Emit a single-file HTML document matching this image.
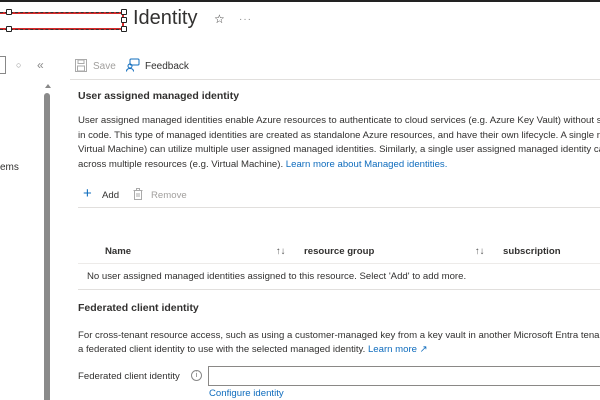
<!DOCTYPE html>
<html><head><meta charset="utf-8"><style>
*{margin:0;padding:0;box-sizing:border-box}
html,body{width:600px;height:400px;overflow:hidden}
body{background:#fff;font-family:"Liberation Sans",sans-serif;color:#323130;position:relative}
#w{position:absolute;left:0;top:0;width:600px;height:400px;overflow:hidden}
.a{position:absolute;white-space:nowrap}
.p{font-size:9.6px;line-height:14px;color:#323130}
.lnk{color:#0f6cbd}
h3{font-size:10.5px;font-weight:bold}
</style></head><body><div id="w">
<div class="a" style="left:0;top:0;width:600px;height:2px;background:#222"></div>
<div class="a" style="left:-2px;top:12px;width:126px;height:18px;border:2px solid #d42a2a;"></div>
<div class="a" style="left:0;top:12px;width:124px;height:0;border-top:1px dashed #333"></div>
<div class="a" style="left:0;top:29px;width:124px;height:0;border-top:1px dashed #333"></div>
<div class="a" style="left:6px;top:9px;width:6px;height:6px;border:1px solid #222;background:#fff;border-radius:1px"></div>
<div class="a" style="left:6px;top:26px;width:6px;height:6px;border:1px solid #222;background:#fff;border-radius:1px"></div>
<div class="a" style="left:121px;top:9px;width:6px;height:6px;border:1px solid #222;background:#fff;border-radius:1px"></div>
<div class="a" style="left:121px;top:17px;width:6px;height:6px;border:1px solid #222;background:#fff;border-radius:1px"></div>
<div class="a" style="left:121px;top:26px;width:6px;height:6px;border:1px solid #222;background:#fff;border-radius:1px"></div>
<div class="a" style="left:133px;top:7px;font-size:20px;color:#323130">Identity</div>
<div class="a" style="left:214px;top:12px;font-size:12px">☆</div>
<div class="a" style="left:239px;top:14px;font-size:10px;color:#888;letter-spacing:1px">···</div>
<div class="a" style="left:-2px;top:56px;width:8px;height:18px;border:1px solid #888;border-left:none"></div>
<div class="a" style="left:16px;top:60px;font-size:9px;color:#888">○</div>
<div class="a" style="left:37px;top:58px;font-size:12px;color:#888">«</div>
<div class="a" style="left:0;top:162px;font-size:10px">ems</div>
<div class="a" style="left:45px;top:84px;width:0;height:0;border-left:3px solid transparent;border-right:3px solid transparent;border-bottom:4px solid #888"></div>
<div class="a" style="left:44px;top:93px;width:6px;height:310px;background:#8a8a8a;border-radius:3px"></div>
<svg class="a" style="left:75px;top:59px" width="12" height="13" viewBox="0 0 12 13"><rect x="0.5" y="0.5" width="11" height="12" fill="none" stroke="#aaa"/><rect x="3" y="1" width="6" height="3.5" fill="none" stroke="#aaa"/><rect x="2.5" y="7" width="7" height="5" fill="none" stroke="#aaa"/></svg>
<div class="a" style="left:93px;top:61px;font-size:10px;color:#a19f9d">Save</div>
<svg class="a" style="left:126px;top:58px" width="14" height="14" viewBox="0 0 14 14"><rect x="4" y="1" width="9" height="6" rx="1" fill="none" stroke="#0f6cbd"/><circle cx="4" cy="8" r="2" fill="none" stroke="#0f6cbd"/><path d="M0.5 13.5c0-2 1.5-3 3.5-3s3.5 1 3.5 3" fill="none" stroke="#0f6cbd"/></svg>
<div class="a" style="left:145px;top:61px;font-size:10px">Feedback</div>
<div class="a" style="left:70px;top:79px;width:530px;height:1px;background:#e1dfdd"></div>
<h3 class="a" style="left:78px;top:90px">User assigned managed identity</h3>
<div class="a p" style="left:78px;top:114px;line-height:14.5px">User assigned managed identities enable Azure resources to authenticate to cloud services (e.g. Azure Key Vault) without storing credentials<br>in code. This type of managed identities are created as standalone Azure resources, and have their own lifecycle. A single resource (e.g.<br>Virtual Machine) can utilize multiple user assigned managed identities. Similarly, a single user assigned managed identity can be shared<br>across multiple resources (e.g. Virtual Machine). <span class="lnk">Learn more about Managed identities.</span></div>
<div class="a" style="left:83px;top:186px;font-size:15px;color:#0f6cbd;line-height:15px">+</div>
<div class="a" style="left:102px;top:190px;font-size:9.6px">Add</div>
<svg class="a" style="left:133px;top:188px" width="10" height="12" viewBox="0 0 10 12"><path d="M0.5 2.5h9M3.5 2.5V0.5h3v2M1.5 2.5v9h7v-9M4 5v4M6 5v4" fill="none" stroke="#aaa"/></svg>
<div class="a" style="left:151px;top:190px;font-size:9.6px;color:#a19f9d">Remove</div>
<div class="a" style="left:78px;top:207px;width:522px;height:1px;background:#e1dfdd"></div>
<div class="a" style="left:105px;top:246px;font-size:9.6px;font-weight:bold;color:#323130">Name</div>
<div class="a" style="left:276px;top:246px;font-size:9.6px;color:#555">↑↓</div>
<div class="a" style="left:304px;top:246px;font-size:9.6px;font-weight:bold">resource group</div>
<div class="a" style="left:475px;top:246px;font-size:9.6px;color:#555">↑↓</div>
<div class="a" style="left:503px;top:246px;font-size:9.6px;font-weight:bold">subscription</div>
<div class="a" style="left:78px;top:263px;width:522px;height:1px;background:#edebe9"></div>
<div class="a p" style="left:87px;top:270px">No user assigned managed identities assigned to this resource. Select 'Add' to add more.</div>
<div class="a" style="left:78px;top:289px;width:522px;height:1px;background:#e1dfdd"></div>
<h3 class="a" style="left:78px;top:302px">Federated client identity</h3>
<div class="a p" style="left:78px;top:329px">For cross-tenant resource access, such as using a customer-managed key from a key vault in another Microsoft Entra tenant, configure<br>a federated client identity to use with the selected managed identity. <span class="lnk">Learn more ↗</span></div>
<div class="a p" style="left:78px;top:370px">Federated client identity</div>
<div class="a" style="left:191px;top:370px;width:11px;height:11px;border:1px solid #888;border-radius:50%;font-size:7px;text-align:center;line-height:9px;color:#666">i</div>
<div class="a" style="left:208px;top:366px;width:400px;height:20px;border:1px solid #8a8886"></div>
<div class="a p lnk" style="left:209px;top:387px">Configure identity</div>
</div></body></html>
